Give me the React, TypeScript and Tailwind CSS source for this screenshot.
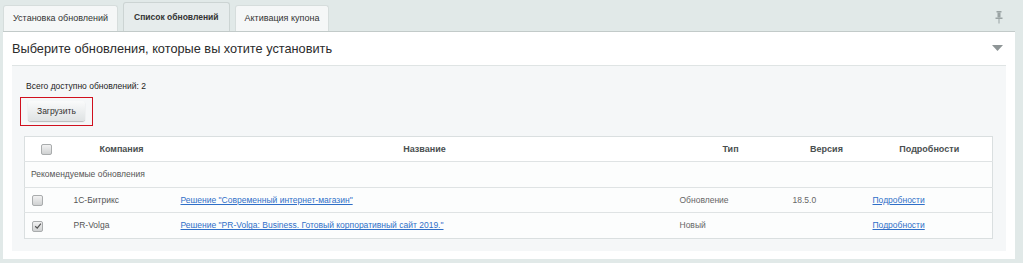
import React from "react";

const tabs = [
  { label: "Установка обновлений", active: false },
  { label: "Список обновлений", active: true },
  { label: "Активация купона", active: false },
];

const rows = [
  {
    checked: false,
    company: "1С-Битрикс",
    name: "Решение \"Современный интернет-магазин\"",
    type: "Обновление",
    version: "18.5.0",
  },
  {
    checked: true,
    company: "PR-Volga",
    name: "Решение \"PR-Volga: Business. Готовый корпоративный сайт 2019.\"",
    type: "Новый",
    version: "",
  },
];

const Checkbox: React.FC<{ checked?: boolean }> = ({ checked }) => (
  <span className="inline-flex w-[11px] h-[11px] items-center justify-center rounded-[2px] border border-[#a9acad] bg-gradient-to-b from-[#f2f2f2] to-[#cfd1d2] align-middle">
    {checked && (
      <svg width="8" height="8" viewBox="0 0 8 8">
        <path d="M1.2 4.2 L3.2 6.1 L6.9 1.6" fill="none" stroke="#555" strokeWidth="1.2" />
      </svg>
    )}
  </span>
);

const PinIcon = () => (
  <svg width="8" height="14" viewBox="0 0 8 14">
    <rect x="1.5" y="1" width="5" height="1.5" fill="#9aa3a3" />
    <rect x="2.5" y="2.5" width="3" height="5" fill="#9aa3a3" />
    <rect x="0.5" y="7.5" width="7" height="1.5" fill="#9aa3a3" />
    <rect x="3.5" y="9" width="1" height="4.5" fill="#9aa3a3" />
  </svg>
);

export default function App() {
  return (
    <div
      className="w-[1023px] h-[263px] overflow-hidden bg-[#e1e9e8] text-[#333]"
      style={{ fontFamily: "'Liberation Sans', Arial, sans-serif" }}
    >
      {/* tabs */}
      <div className="flex items-end h-[31px] pl-[3px] pr-[20px] gap-[5px]">
        {tabs.map((t) => (
          <div
            key={t.label}
            className={
              t.active
                ? "h-[29px] px-[10px] flex items-center rounded-t-[3px] border border-b-0 border-[#ccd4d3] bg-[#e6ecec] text-[8.5px] font-bold text-[#333]"
                : "h-[26px] px-[9px] flex items-center rounded-t-[3px] border border-b-0 border-[#d6dddc] bg-[#f5f7f7] text-[9px] text-[#333]"
            }
          >
            {t.label}
          </div>
        ))}
        <div className="ml-auto self-center pt-[2px]">
          <PinIcon />
        </div>
      </div>

      {/* panel */}
      <div className="ml-[3px] w-[1012px] h-[228px] bg-white border-t border-[#c2cac9]">
        <div className="h-[33px] flex items-center pl-[9px] pr-[12px]">
          <span className="text-[12.75px] text-[#2b2b2b]">
            Выберите обновления, которые вы хотите установить
          </span>
          <svg className="ml-auto mt-[-2px]" width="11" height="6" viewBox="0 0 11 6">
            <path d="M0 0 H11 L5.5 6 Z" fill="#8e9596" />
          </svg>
        </div>

        <div className="mx-[9px] h-[186px] bg-[#f5f7f8] border-t border-[#dfe4e4] pt-[14px]">
          <div className="pl-[14px] text-[8.5px] leading-[12px] text-[#222]">
            Всего доступно обновлений: 2
          </div>
          <div className="mt-[5px] ml-[8px] inline-block border border-[#d0101e] pl-[7px] pr-[7px] pt-[3px] pb-[4px] leading-none">
            <button className="h-[20px] px-[9px] rounded-[3px] bg-gradient-to-b from-[#fafbfb] to-[#dfe3e4] shadow-[0_1px_1px_rgba(0,0,0,0.25)] text-[8.5px] text-[#333]">
              Загрузить
            </button>
          </div>

          <table className="mt-[10px] ml-[12px] w-[968px] table-fixed border-collapse border border-[#dadfe0] bg-[#fcfdfd] text-[8.5px]">
            <colgroup>
              <col className="w-[44px]" />
              <col className="w-[106px]" />
              <col className="w-[500px]" />
              <col className="w-[112px]" />
              <col className="w-[80px]" />
              <col className="w-[126px]" />
            </colgroup>
            <thead>
              <tr className="h-[25px] border-b border-[#dfe3e4] bg-white">
                <th className="text-center align-middle">
                  <Checkbox />
                </th>
                <th className="text-center text-[9px] font-bold text-[#4a4f50]">Компания</th>
                <th className="text-center text-[9px] font-bold text-[#4a4f50]">Название</th>
                <th className="text-center text-[9px] font-bold text-[#4a4f50]">Тип</th>
                <th className="text-center text-[9px] font-bold text-[#4a4f50]">Версия</th>
                <th className="text-center text-[9px] font-bold text-[#4a4f50]">Подробности</th>
              </tr>
            </thead>
            <tbody>
              <tr className="h-[26px] border-b border-[#dfe3e4]">
                <td colSpan={6} className="pl-[6px] text-[#555]">
                  Рекомендуемые обновления
                </td>
              </tr>
              {rows.map((r, i) => (
                <tr
                  key={r.company}
                  className={i === 0 ? "h-[25px] border-b border-[#dfe3e4]" : "h-[26px]"}
                >
                  <td className="pl-[7px] align-middle">
                    <Checkbox checked={r.checked} />
                  </td>
                  <td className="pl-[5px] text-[#555]">{r.company}</td>
                  <td className="pl-[6px]">
                    <a href="#" className="text-[#2f6fc8] underline">
                      {r.name}
                    </a>
                  </td>
                  <td className="pl-[5px] text-[#666]">{r.type}</td>
                  <td className="pl-[6px] text-[#666]">{r.version}</td>
                  <td className="pl-[6px]">
                    <a href="#" className="text-[#2f6fc8] underline">
                      Подробности
                    </a>
                  </td>
                </tr>
              ))}
            </tbody>
          </table>
        </div>
      </div>
    </div>
  );
}
